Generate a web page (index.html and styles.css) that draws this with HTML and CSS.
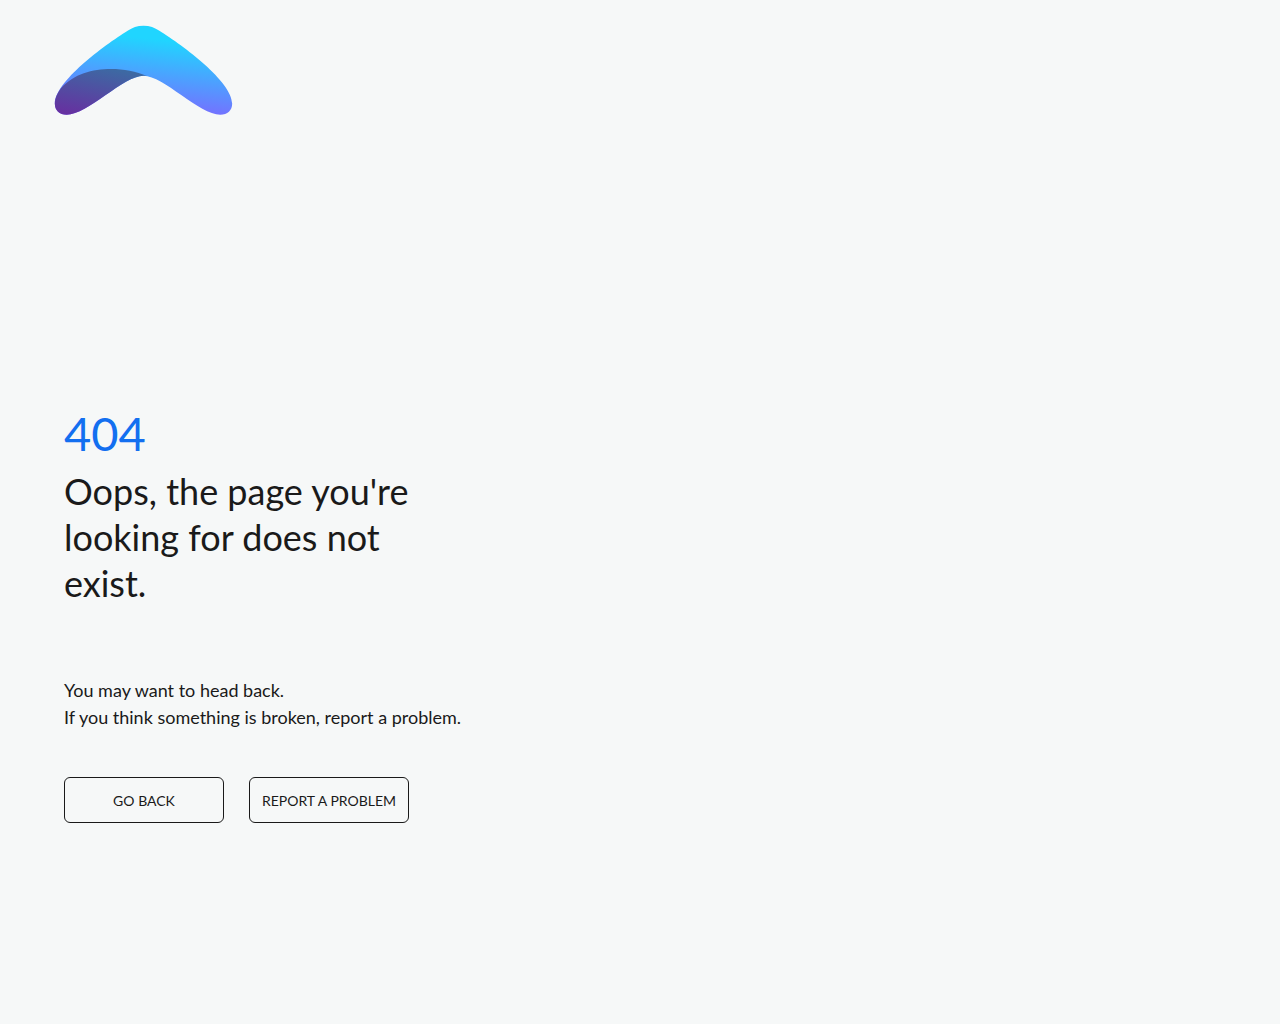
FILE: index.html
```html
<!DOCTYPE html>
<html lang="en">
<head>
    <meta charset="UTF-8">
    <meta name="viewport" content="width=device-width, initial-scale=1.0">
    <title>404 - Page not found</title>
    <link rel="stylesheet" href="styles.css">
</head>
<body>
    <header class="header">
        <a href="/" aria-label="Home">
            <svg class="logo" viewBox="42 44 536 272" aria-hidden="true">
                <defs>
                    <linearGradient id="wing" gradientUnits="userSpaceOnUse" x1="330" y1="85" x2="305" y2="312">
                        <stop offset="0" stop-color="#20d5ff"/>
                        <stop offset="1" stop-color="#7c68ff"/>
                    </linearGradient>
                    <linearGradient id="fold" gradientUnits="userSpaceOnUse" x1="210" y1="177" x2="180" y2="330">
                        <stop offset="0" stop-color="#3d69a3"/>
                        <stop offset="1" stop-color="#6631a0"/>
                    </linearGradient>
                </defs>
                <path fill="url(#wing)" d="M310 46C291 46 276 52 262 61C190 106 42 215 42 281C42 302 56 315 78 315C140 315 250 197 310 197C370 197 480 315 542 315C564 315 578 302 578 281C578 215 430 106 358 61C344 52 329 46 310 46Z"/>
                <path fill="url(#fold)" d="M60 236C100 191 155 177 212 177C250 177 288 185 321 198C317 197 314 197 310 197C250 197 140 315 78 315C56 315 42 302 42 281C42 267 49 251 60 236Z"/>
            </svg>
        </a>
    </header>

    <main class="content">
        <p class="code">404</p>
        <h1>Oops, the page you're looking for does not exist.</h1>
        <p class="help">
            You may want to head back.<br>
            If you think something is broken, report a problem.
        </p>
        <div class="actions">
            <button type="button">GO BACK</button>
            <button type="button">REPORT A PROBLEM</button>
        </div>
    </main>
</body>
</html>
```
FILE: styles.css
```css
* {
    box-sizing: border-box;
}
body {
    margin: 0;
    background: #f6f8f8;
    color: #1a1a1a;
    font-family: Lato, sans-serif;
}
.header {
    padding: 25px 54px;
}
.header a {
    display: inline-block;
}
.logo {
    display: block;
    width: 179px;
    height: 90px;
}
.content {
    padding: 260px 64px 64px;
}
.code {
    margin: 0;
    color: #136ff0;
    font-size: 47px;
    line-height: 60px;
}
h1 {
    max-width: 380px;
    margin: 5px 0 71px;
    font-size: 36px;
    font-weight: 400;
    line-height: 46px;
}
.help {
    margin: 0 0 46px;
    font-size: 18px;
    line-height: 27px;
}
.actions {
    display: flex;
    flex-wrap: wrap;
    gap: 25px;
}
button {
    width: 160px;
    height: 46px;
    padding: 0;
    border: 1px solid #1a1a1a;
    border-radius: 6px;
    background: transparent;
    color: #1a1a1a;
    font-family: inherit;
    font-size: 14px;
    cursor: pointer;
}
button:hover {
    background: #e9eded;
}
```
